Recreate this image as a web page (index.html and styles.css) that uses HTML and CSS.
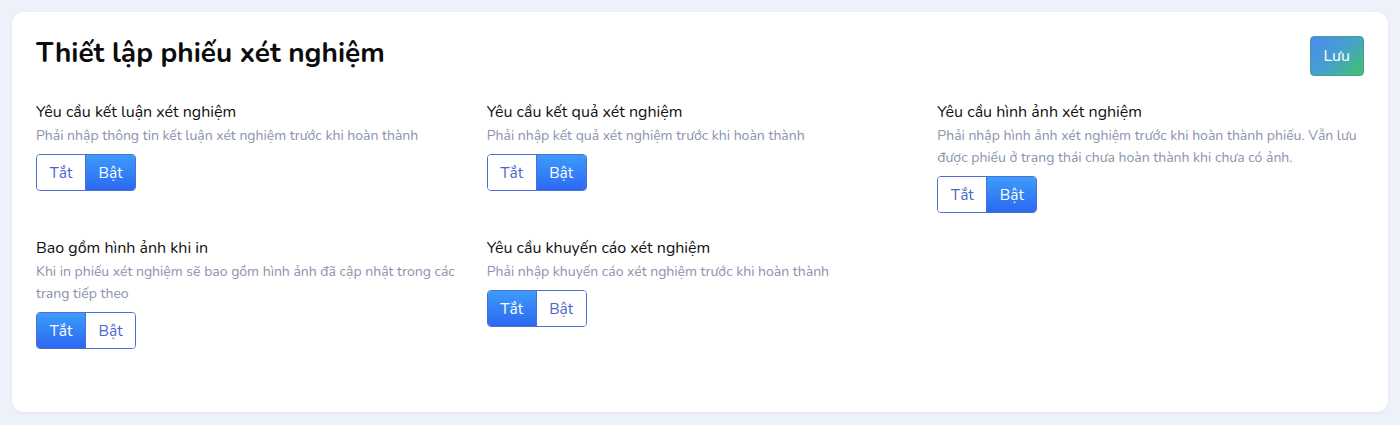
FILE: index.html
```html
<!DOCTYPE html>
<html lang="vi">
<head>
<meta charset="utf-8">
<title>Thiết lập phiếu xét nghiệm</title>
<link rel="stylesheet" href="styles.css">
</head>
<body>
<div class="card">
  <div class="header">
    <h1 class="title">Thiết lập phiếu xét nghiệm</h1>
    <button class="save">Lưu</button>
  </div>
  <div class="grid">
    <div class="item">
      <div class="label">Yêu cầu kết luận xét nghiệm</div>
      <div class="desc">Phải nhập thông tin kết luận xét nghiệm trước khi hoàn thành</div>
      <div class="toggle"><button class="opt">Tắt</button><button class="opt on">Bật</button></div>
    </div>
    <div class="item">
      <div class="label">Yêu cầu kết quả xét nghiệm</div>
      <div class="desc">Phải nhập kết quả xét nghiệm trước khi hoàn thành</div>
      <div class="toggle"><button class="opt">Tắt</button><button class="opt on">Bật</button></div>
    </div>
    <div class="item">
      <div class="label">Yêu cầu hình ảnh xét nghiệm</div>
      <div class="desc">Phải nhập hình ảnh xét nghiệm trước khi hoàn thành phiếu. Vẫn lưu được phiếu ở trạng thái chưa hoàn thành khi chưa có ảnh.</div>
      <div class="toggle"><button class="opt">Tắt</button><button class="opt on">Bật</button></div>
    </div>
    <div class="item">
      <div class="label">Bao gồm hình ảnh khi in</div>
      <div class="desc">Khi in phiếu xét nghiệm sẽ bao gồm hình ảnh đã cập nhật trong các trang tiếp theo</div>
      <div class="toggle"><button class="opt on">Tắt</button><button class="opt">Bật</button></div>
    </div>
    <div class="item">
      <div class="label">Yêu cầu khuyến cáo xét nghiệm</div>
      <div class="desc">Phải nhập khuyến cáo xét nghiệm trước khi hoàn thành</div>
      <div class="toggle"><button class="opt on">Tắt</button><button class="opt">Bật</button></div>
    </div>
  </div>
</div>
</body>
</html>
```
FILE: styles.css
```css
* { box-sizing: border-box; }
html, body { margin: 0; }
body {
  background: #edf1f9;
  padding: 12px;
  font-family: "Nunito", "Noto Sans", "Liberation Sans", sans-serif;
  color: #111;
}
.card {
  background: #fff;
  border-radius: 12px;
  min-height: 400px;
  padding: 24px;
  box-shadow: 0 1px 4px rgba(60, 80, 130, 0.06);
}
.header {
  display: flex;
  justify-content: space-between;
  align-items: flex-start;
  margin-bottom: 24px;
}
.title {
  margin: 0;
  font-size: 28px;
  line-height: 34px;
  font-weight: 700;
  color: #0b0b0b;
}
.save {
  height: 40px;
  padding: 0 13px;
  border: 1px solid #4a9c9a;
  border-radius: 4px;
  background: linear-gradient(135deg, #4a8cf0 0%, #47a0cc 50%, #3fc46a 100%);
  color: #fff;
  font: inherit;
  font-size: 16px;
}
.grid {
  display: grid;
  grid-template-columns: repeat(3, 1fr);
  margin: 0 -12px;
}
.item {
  padding: 0 12px;
  margin-bottom: 23px;
}
.label {
  font-size: 16px;
  line-height: 24px;
  color: #111;
}
.desc {
  font-size: 14px;
  line-height: 22px;
  color: #8a93ac;
  margin-top: 1px;
}
.toggle {
  display: inline-flex;
  margin-top: 7px;
  border: 1px solid #4b6fd6;
  border-radius: 4px;
  overflow: hidden;
}
.opt {
  height: 35px;
  padding: 0 12.5px;
  border: 0;
  background: #fff;
  color: #4b67cf;
  font: inherit;
  font-size: 15.5px;
}
.opt + .opt { border-left: 1px solid #4b6fd6; }
.opt.on {
  background: linear-gradient(180deg, #3d9cfa 0%, #2c68f2 100%);
  color: #fff;
}
```
